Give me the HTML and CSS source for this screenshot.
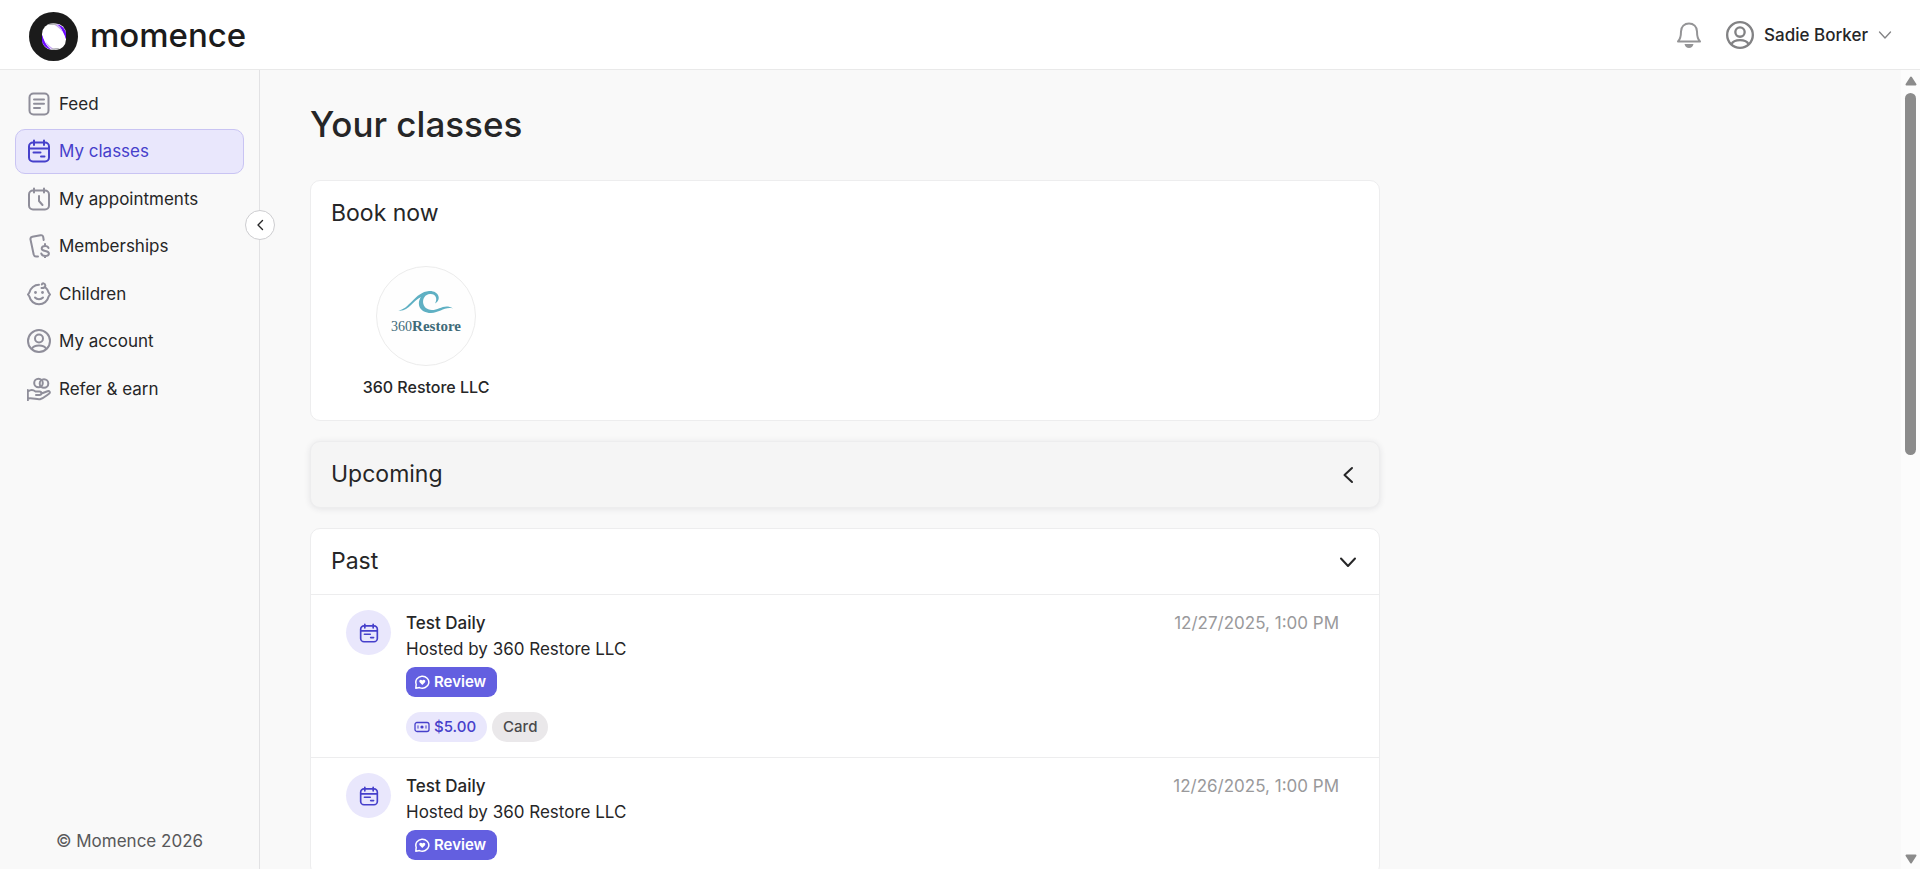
FILE: index.html
```html
<!DOCTYPE html>
<html lang="en">
<head>
    <meta charset="UTF-8">
    <meta name="viewport" content="width=device-width, initial-scale=1.0">
    <title>Your classes - Momence</title>
    <link rel="stylesheet" href="styles.css">
</head>
<body>
    <svg class="sprite" aria-hidden="true">
        <symbol id="calendar" viewBox="0 0 24 24">
            <rect x="2" y="3.5" width="20" height="19" rx="4"/>
            <path d="M2.5 9.5h19M7 1.5v4.5M17 1.5v4.5M6.5 13.5h7M14 17.5h3.5"/>
        </symbol>
        <symbol id="person" viewBox="0 0 24 24">
            <circle cx="12" cy="12" r="11"/>
            <circle cx="12" cy="9.5" r="4"/>
            <path d="M4.8 19.8c1.2-2.6 4-3.4 7.2-3.4s6 .8 7.2 3.4"/>
        </symbol>
        <symbol id="chat" viewBox="0 0 16 16">
            <path d="M1.8 14.2l.4-4A6.500 6 0 1 1 5.500 13.600z" stroke-width="1.5"/>
            <path class="solid" d="M8.300 11L5.600 8.300C4.300 6.500 6.800 4.700 8.300 6.500c1.500-1.800 4 0 2.700 1.800z"/>
        </symbol>
        <symbol id="cash" viewBox="0 0 16 12">
            <rect x="1" y="1.5" width="14" height="9" rx="2" stroke-width="1.3"/>
            <circle class="solid" cx="8" cy="6" r="1.6"/>
            <path d="M4 4.8v2.4M12 4.8v2.4"/>
        </symbol>
    </svg>

    <header class="topbar">
        <a href="#" class="logo">
            <svg width="49" height="49" viewBox="0 0 49 49" aria-hidden="true">
                <circle cx="24.5" cy="24.5" r="24.5" fill="#1b1b1b"/>
                <rect x="13" y="11.5" width="24" height="26.5" rx="10.5" fill="#fff"/>
                <path d="M28 12.200c5 1.300 9 5.300 9 10.800v4c-1-6-4-11-9-14.800zM13 23c1 6 4 11 9 14.500-5-1.300-9-5-9-10.500z" fill="#6d0bff"/>
                <path d="M30 13c4 2 6.500 5 7 9v5c-1.500-4-3.500-9-7-14zM20 37c-4-2-6.500-5-7-9v-5c1.500 4 3.500 9 7 14z" fill="#6d0bff"/>
                <path d="M24 11.500c5 1 8 4 9.500 8.500-2.500-3.500-6-6-9.500-8.500zM26 38c-5-1-8-4-9.500-8.500 2.500 3.500 6 6 9.500 8.500z" fill="#c7a6f7"/>
                <path d="M18 13c3-2 8-2 11 .5-4-.5-7-.8-11-.5zM21 37c3 1.500 7 1.200 10-1-3-.3-6 0-10 1z" fill="#b4b4b8"/>
            </svg>
            <span class="logo-text">momence</span>
        </a>
        <div class="topbar-right">
            <button class="bell" aria-label="Notifications">
                <svg width="26" height="28" viewBox="0 0 26 28">
                    <path d="M2 20.5c2.500-2.500 3-5 3-10C5 5.500 8.500 2.500 13 2.500s8 3 8 8c0 5 .5 7.500 3 10z"/>
                    <path class="solid" d="M8.500 23h9c-.6 2.600-2.200 4-4.500 4s-3.900-1.400-4.500-4z"/>
                </svg>
            </button>
            <button class="user">
                <svg class="user-icon" width="28" height="28"><use href="#person"/></svg>
                <span>Sadie Borker</span>
                <svg class="user-arrow" width="14" height="10" viewBox="0 0 14 10"><path d="M1.500 2L7 8l5.500-6" stroke-width="1.3"/></svg>
            </button>
        </div>
    </header>

    <div class="page">
        <aside class="sidebar">
            <nav class="menu">
                <a href="#" class="menu-item">
                    <svg viewBox="0 0 24 24">
                        <rect x="2.500" y="1.500" width="19" height="21" rx="4"/>
                        <path d="M7 7.500h10M7 11.800h10M7 16h6"/>
                    </svg>
                    Feed
                </a>
                <a href="#" class="menu-item active">
                    <svg><use href="#calendar"/></svg>
                    My classes
                </a>
                <a href="#" class="menu-item">
                    <svg viewBox="0 0 24 24">
                        <rect x="2" y="3.500" width="20" height="19" rx="4"/>
                        <path d="M7 1.500v4M17 1.500v4M12 9v5l3.500 4"/>
                    </svg>
                    My appointments
                </a>
                <a href="#" class="menu-item">
                    <svg viewBox="0 0 24 24">
                        <path d="M11 22.500H9c-1.500 0-2-.8-2.300-2L3.500 5.500C3.200 4 4 3 5.300 2.700l8.200-1.500c1.500-.3 2.500.5 2.700 1.800l.5 3"/>
                        <path d="M21.500 14c-.5-1.500-1.800-2-3.500-2-2 0-3.300.9-3.300 2.500 0 3.500 7.200 1.500 7.200 5 0 1.600-1.500 2.500-3.700 2.500-2 0-3.500-.8-3.900-2.500M18 10v2M18 22v2"/>
                    </svg>
                    Memberships
                </a>
                <a href="#" class="menu-item">
                    <svg viewBox="0 0 24 24">
                        <path d="M12 2.800A9.800 9.800 0 0 0 2.400 10.500L1 12.500l1.400 2a9.800 9.800 0 0 0 19.200 0l1.400-2-1.400-2c-.5-2.200-1.800-4-3.600-5.500M14.500 6c2.500.3 4-1 3.800-2.700-.2-2.300-3-2.500-3.500-.8"/>
                        <path d="M8 15.500c2 2.200 6 2.200 8 0"/>
                        <circle class="solid" cx="8.500" cy="10.500" r="1.400"/>
                        <circle class="solid" cx="15.500" cy="10.500" r="1.400"/>
                    </svg>
                    Children
                </a>
                <a href="#" class="menu-item">
                    <svg><use href="#person"/></svg>
                    My account
                </a>
                <a href="#" class="menu-item">
                    <svg viewBox="0 0 24 24">
                        <circle cx="11.500" cy="6" r="4.300"/>
                        <circle cx="17" cy="6.500" r="4.300"/>
                        <path d="M.8 13v10.500M1 14.500c2-1.500 5-2 7.500 0h4c2.500 0 2.500 3.500 0 3.500H9M14.500 16.500l6-2.300c2-.7 3.200 1.300 1.500 2.500-3 2.200-5.500 4.500-9 5.500-3.500.6-7-1.700-12-.7"/>
                    </svg>
                    Refer &amp; earn
                </a>
            </nav>
            <p class="copyright">© Momence 2026</p>
            <button class="collapse" aria-label="Collapse menu">
                <svg width="8" height="12" viewBox="0 0 8 12"><path d="M6.500 1.500L2 6l4.500 4.500" stroke-width="1.4"/></svg>
            </button>
        </aside>

        <main class="content">
            <h1>Your classes</h1>

            <section class="card book">
                <h2>Book now</h2>
                <a href="#" class="host">
                    <span class="host-logo">
                        <svg class="wave" width="56" height="24" viewBox="0 0 56 24" aria-hidden="true">
                            <path d="M0 20.500C11 20 17 2 31 1c10-.5 13 9 6 12.500 3-5 .5-10-5-9.500-10 1-9 16 2 16 7 0 13-7 21-1.500-9-2-13 4.500-22 4.500-11 0-15-9-10-16C14 11 11 22 0 20.500z"/>
                        </svg>
                        <span class="host-brand"><small>360</small>Restore</span>
                    </span>
                    <span class="host-name">360 Restore LLC</span>
                </a>
            </section>

            <section class="card upcoming">
                <button class="card-head">
                    <span>Upcoming</span>
                    <svg width="24" height="24" viewBox="0 0 24 24"><path d="M16 5l-7.500 7 7.500 7"/></svg>
                </button>
            </section>

            <section class="card past">
                <button class="card-head">
                    <span>Past</span>
                    <svg width="24" height="24" viewBox="0 0 24 24"><path d="M5 8.500l7 7.500 7-7.500"/></svg>
                </button>
                <article class="session">
                    <span class="session-icon"><svg width="20" height="20"><use href="#calendar"/></svg></span>
                    <div class="session-info">
                        <h3>Test Daily</h3>
                        <p>Hosted by 360 Restore LLC</p>
                        <button class="review"><svg width="16" height="16"><use href="#chat"/></svg>Review</button>
                        <div class="tags">
                            <span class="tag price"><svg width="16" height="12"><use href="#cash"/></svg>$5.00</span>
                            <span class="tag">Card</span>
                        </div>
                    </div>
                    <time>12/27/2025, 1:00 PM</time>
                </article>
                <article class="session">
                    <span class="session-icon"><svg width="20" height="20"><use href="#calendar"/></svg></span>
                    <div class="session-info">
                        <h3>Test Daily</h3>
                        <p>Hosted by 360 Restore LLC</p>
                        <button class="review"><svg width="16" height="16"><use href="#chat"/></svg>Review</button>
                    </div>
                    <time>12/26/2025, 1:00 PM</time>
                </article>
            </section>
        </main>

        <div class="scrollbar" aria-hidden="true">
            <svg width="12" height="10" viewBox="0 0 12 10"><path d="M6 1.500L10.500 8.500h-9z"/></svg>
            <div class="thumb"></div>
            <svg width="12" height="10" viewBox="0 0 12 10"><path d="M6 8.500L1.500 1.500h9z"/></svg>
        </div>
    </div>
</body>
</html>
```
FILE: styles.css
```css
* {
    margin: 0;
    padding: 0;
    box-sizing: border-box;
}

body {
    display: flex;
    flex-direction: column;
    height: 100vh;
    overflow: hidden;
    background: #f9f9f9;
    color: #262627;
    font-family: Inter, 'Liberation Sans', sans-serif;
    font-size: 17px;
    line-height: 26px;
}

a {
    color: inherit;
    text-decoration: none;
}

button {
    border: none;
    background: none;
    color: inherit;
    font: inherit;
    cursor: pointer;
}

svg {
    display: block;
    flex-shrink: 0;
    fill: none;
    stroke-linecap: round;
    stroke-linejoin: round;
}

.solid {
    fill: currentColor;
    stroke: none;
}

.sprite {
    position: absolute;
    width: 0;
    height: 0;
}

/* top bar */
.topbar {
    display: flex;
    justify-content: space-between;
    align-items: center;
    height: 70px;
    flex-shrink: 0;
    padding: 0 28px 0 29px;
    background: #fff;
    border-bottom: 1px solid #e9e9e9;
}

.logo {
    display: flex;
    align-items: center;
    gap: 12px;
    padding-top: 4px;
}

.logo-text {
    color: #1b1b1b;
    font-size: 33px;
    font-weight: 500;
    line-height: 40px;
    padding-bottom: 4px;
}

.topbar-right {
    display: flex;
    align-items: center;
    gap: 24px;
}

.bell {
    color: #949496;
}

.bell svg {
    stroke: currentColor;
    stroke-width: 2;
}

.user {
    display: flex;
    align-items: center;
    gap: 10px;
    font-weight: 500;
}

.user-icon {
    stroke: #828284;
    stroke-width: 2;
}

.user-arrow {
    stroke: #828284;
}

/* layout */
.page {
    display: flex;
    flex: 1;
    min-height: 0;
}

/* sidebar */
.sidebar {
    position: relative;
    display: flex;
    flex-direction: column;
    justify-content: space-between;
    width: 260px;
    flex-shrink: 0;
    padding: 11px 15px 15px;
    border-right: 1px solid #e2e2e4;
}

.menu {
    display: flex;
    flex-direction: column;
    justify-content: space-between;
    height: 330px;
}

.menu-item {
    display: flex;
    align-items: center;
    gap: 8px;
    height: 45px;
    padding: 0 11px;
    border: 1px solid transparent;
    border-radius: 10px;
}

.menu-item svg {
    width: 24px;
    height: 24px;
    color: #8f8e9a;
    stroke: currentColor;
    stroke-width: 2;
}

.menu-item.active {
    background: #e9e7fc;
    border-color: #c9c4f3;
    color: #4640cb;
}

.menu-item.active svg {
    color: #4640cb;
}

.copyright {
    color: #58585a;
    text-align: center;
}

.collapse {
    position: absolute;
    top: 140px;
    right: -16px;
    display: flex;
    justify-content: center;
    align-items: center;
    width: 30px;
    height: 30px;
    background: #fff;
    border: 1px solid #cdcdd0;
    border-radius: 50%;
}

.collapse svg {
    stroke: #262627;
}

/* content */
.content {
    flex: 1;
    min-width: 0;
    padding: 32px 50px 0;
    overflow: hidden;
}

h1 {
    margin-bottom: 34px;
    font-size: 35px;
    font-weight: 500;
    line-height: 44px;
}

h2,
.card-head {
    font-size: 23px;
    font-weight: 400;
}

.card {
    max-width: 1070px;
    margin-bottom: 20px;
    background: #fff;
    border: 1px solid #ededee;
    border-radius: 10px;
}

.book {
    height: 241px;
    padding: 19px 20px;
}

.host {
    display: flex;
    flex-direction: column;
    align-items: center;
    gap: 8px;
    width: 190px;
    margin-top: 40px;
    font-size: 16px;
    font-weight: 500;
}

.host-logo {
    display: flex;
    flex-direction: column;
    align-items: center;
    gap: 3px;
    width: 100px;
    height: 100px;
    padding-top: 23px;
    background: #fefefe;
    border: 1px solid #ececec;
    border-radius: 50%;
}

.wave {
    fill: #5fb0c3;
}

.host-brand {
    color: #3f6b79;
    font-family: 'Liberation Serif', serif;
    font-size: 15px;
    font-weight: 700;
    line-height: 18px;
}

.host-brand small {
    font-size: 14px;
    font-weight: 400;
}

.card-head {
    display: flex;
    justify-content: space-between;
    align-items: center;
    width: 100%;
    height: 65px;
    padding: 0 19px 0 20px;
}

.card-head span {
    padding-bottom: 2px;
}

.card-head svg {
    stroke: #262627;
    stroke-width: 2;
}

.upcoming {
    background: #f5f5f5;
    box-shadow: 0 1px 6px rgba(40, 40, 60, 0.1);
}

.session {
    display: flex;
    gap: 15px;
    padding: 15px 40px 15px 35px;
    border-top: 1px solid #ededee;
}

.session-icon {
    display: flex;
    justify-content: center;
    align-items: center;
    width: 45px;
    height: 45px;
    flex-shrink: 0;
    background: #e9e7fc;
    border-radius: 50%;
}

.session-icon svg {
    stroke: #4640cb;
    stroke-width: 2;
}

.session-info {
    flex: 1;
}

h3 {
    font-size: 17px;
    font-weight: 500;
}

.review {
    display: flex;
    align-items: center;
    gap: 4px;
    height: 30px;
    margin-top: 5px;
    padding: 0 11px 0 8px;
    background: #635fe0;
    border-radius: 9px;
    color: #fff;
    font-size: 15px;
    font-weight: 600;
}

.review svg {
    stroke: currentColor;
}

.tags {
    display: flex;
    gap: 5px;
    margin-top: 15px;
}

.tag {
    display: flex;
    align-items: center;
    gap: 4px;
    height: 30px;
    padding: 0 11px;
    background: #eae8ea;
    border-radius: 15px;
    color: #49494b;
    font-size: 15px;
    font-weight: 500;
}

.price {
    padding-left: 8px;
    background: #e9e7fc;
    color: #4640cb;
}

.price svg {
    stroke: currentColor;
}

time {
    color: #99999b;
}

/* scrollbar */
.scrollbar {
    display: flex;
    flex-direction: column;
    align-items: center;
    width: 19px;
    flex-shrink: 0;
    padding: 6px 0 5px;
    background: #fcfcfc;
}

.scrollbar svg {
    fill: #8b8b8b;
    stroke: #8b8b8b;
    stroke-width: 2;
}

.thumb {
    width: 11px;
    height: 46%;
    margin: 7px 0 auto;
    background: #8b8b8b;
    border-radius: 6px;
}
```
